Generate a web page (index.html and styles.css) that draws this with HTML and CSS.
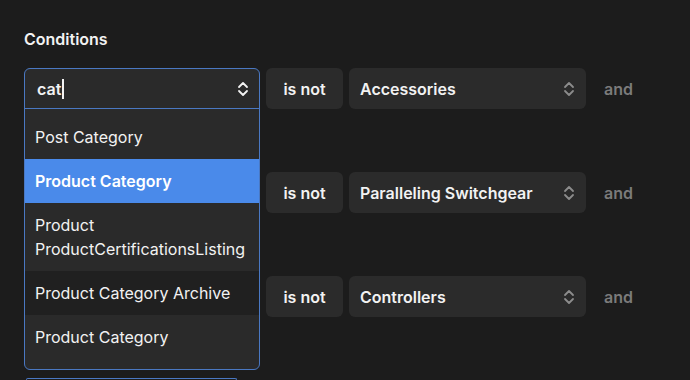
FILE: index.html
```html
<!DOCTYPE html>
<html lang="en">
<head>
    <meta charset="UTF-8">
    <meta name="viewport" content="width=device-width, initial-scale=1.0">
    <title>Conditions</title>
    <link rel="stylesheet" href="styles.css">
</head>
<body>

<h2 class="title">Conditions</h2>

<div class="conditions">
    <div class="row">
        <div class="field">
            <div class="select"></div>

            <div class="combo">
                <div class="combo-input">
                    <span>cat<span class="caret"></span></span>
                    <svg class="chev" width="12" height="16" viewBox="0 0 12 16"><path d="M2 6l4-4 4 4M2 10l4 4 4-4"/></svg>
                </div>
                <ul class="options">
                    <li>Post Category</li>
                    <li class="active">Product Category</li>
                    <li>Product<br>ProductCertificationsListing</li>
                    <li class="dim">Product Category Archive</li>
                    <li>Product Category</li>
                </ul>
            </div>
        </div>
        <div class="op">is not</div>
        <div class="select value">
            <span>Accessories</span>
            <svg class="chev" width="12" height="16" viewBox="0 0 12 16"><path d="M2 6l4-4 4 4M2 10l4 4 4-4"/></svg>
        </div>
        <span class="joiner">and</span>
    </div>

    <div class="row">
        <div class="field">
            <div class="select"></div>
        </div>
        <div class="op">is not</div>
        <div class="select value">
            <span>Paralleling Switchgear</span>
            <svg class="chev" width="12" height="16" viewBox="0 0 12 16"><path d="M2 6l4-4 4 4M2 10l4 4 4-4"/></svg>
        </div>
        <span class="joiner">and</span>
    </div>

    <div class="row">
        <div class="field">
            <div class="select"></div>
        </div>
        <div class="op">is not</div>
        <div class="select value">
            <span>Controllers</span>
            <svg class="chev" width="12" height="16" viewBox="0 0 12 16"><path d="M2 6l4-4 4 4M2 10l4 4 4-4"/></svg>
        </div>
        <span class="joiner">and</span>
    </div>
</div>

<div class="add-button"></div>

</body>
</html>
```

FILE: styles.css
```css
body {
    font-family: Inter, 'Noto Sans', sans-serif;
    background-color: #1c1c1c;
    color: #f2f2f2;
    margin: 0;
    padding: 29px 24px 0;
    height: 380px;
    box-sizing: border-box;
    overflow: hidden;
}

.title {
    font-size: 16px;
    line-height: 20px;
    font-weight: 600;
    margin: 0 0 19px;
}

.conditions {
    display: flex;
    flex-direction: column;
    gap: 63px;
}

.row {
    display: flex;
    align-items: center;
    gap: 6px;
}

.field {
    position: relative;
    width: 236px;
}

.select {
    height: 41px;
    box-sizing: border-box;
    background-color: #2b2b2b;
    border-radius: 6px;
    display: flex;
    align-items: center;
    justify-content: space-between;
    padding: 0 11px 0 11px;
    font-size: 16px;
    font-weight: 600;
}

.select.value {
    width: 237px;
}

.chev {
    fill: none;
    stroke: #8c8c8c;
    stroke-width: 1.8;
    stroke-linecap: round;
    stroke-linejoin: round;
}

.op {
    width: 77px;
    height: 41px;
    background-color: #2b2b2b;
    border-radius: 6px;
    display: flex;
    align-items: center;
    justify-content: center;
    font-size: 16px;
    font-weight: 600;
}

.joiner {
    margin-left: 12px;
    font-size: 16px;
    font-weight: 600;
    color: #7b7b7b;
}

/* open combobox menu, sits over the rows below */
.combo {
    position: absolute;
    top: 0;
    left: 0;
    width: 236px;
    box-sizing: border-box;
    border: 1px solid #4a78c2;
    border-radius: 6px;
    background-color: #2a2a2a;
    z-index: 2;
    overflow: hidden;
}

.combo-input {
    height: 40px;
    box-sizing: border-box;
    border-bottom: 1px solid #4a78c2;
    display: flex;
    align-items: center;
    justify-content: space-between;
    padding: 0 10px 0 12px;
    font-size: 16px;
    font-weight: 600;
}

.combo-input .chev {
    stroke: #f2f2f2;
}

.caret {
    display: inline-block;
    width: 1.5px;
    height: 20px;
    background-color: #f2f2f2;
    vertical-align: -4px;
    margin-left: 1px;
}

.options {
    list-style: none;
    margin: 0;
    padding: 6px 0 10px;
}

.options li {
    padding: 10px 10px;
    font-size: 16px;
    line-height: 24px;
}

.options li.active {
    background-color: #4a8aea;
    font-weight: 600;
    color: #ffffff;
}

.options li.dim {
    background-color: #202020;
}

.add-button {
    margin: 61px 0 0 2px;
    width: 209px;
    height: 1px;
    border: 1px solid #4a78c2;
    border-bottom: none;
    border-radius: 6px 6px 0 0;
}
```
